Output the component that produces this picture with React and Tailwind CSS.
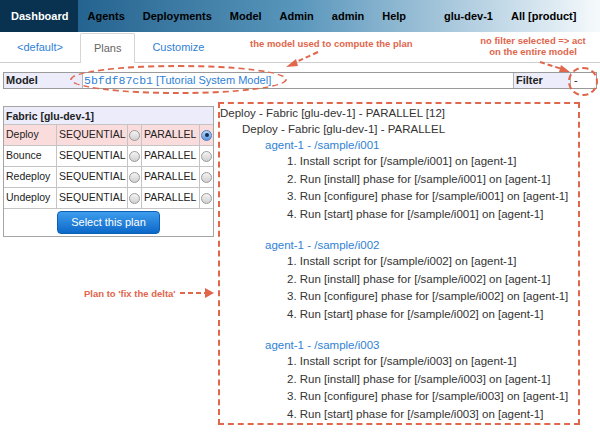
import React from 'react'

const navItems = ['Agents', 'Deployments', 'Model', 'Admin', 'admin', 'Help']
const RED = '#e0664c'

function Radio({ checked }) {
  return checked ? (
    <span className="inline-flex w-[11px] h-[11px] rounded-full border border-[#4a7fc0] bg-gradient-to-b from-[#bcd6f5] to-[#5d97df] items-center justify-center">
      <span className="w-[4px] h-[4px] rounded-full bg-[#10305a]" />
    </span>
  ) : (
    <span className="inline-block w-[11px] h-[11px] rounded-full border border-[#9a9a9a] bg-gradient-to-b from-[#f4f4f4] to-[#d0d0d0]" />
  )
}

const fabricRows = ['Deploy', 'Bounce', 'Redeploy', 'Undeploy']

function Agent({ id, last }) {
  const p = `/sample/${id}`
  return (
    <div className={last ? '' : 'mb-[14px]'}>
      <div className="h-[16px] leading-[16px] pl-[45px] text-[#2f82d6]">agent-1 - {p}</div>
      <div className="pl-[67px] leading-[17.5px] text-[#333]">
        <div>1. Install script for [{p}] on [agent-1]</div>
        <div>2. Run [install] phase for [{p}] on [agent-1]</div>
        <div>3. Run [configure] phase for [{p}] on [agent-1]</div>
        <div>4. Run [start] phase for [{p}] on [agent-1]</div>
      </div>
    </div>
  )
}

export default function App() {
  return (
    <div className="relative w-[600px] h-[432px] overflow-hidden bg-white text-[#222] font-['Liberation_Sans',Arial,sans-serif]">
      {/* top nav */}
      <nav className="flex h-[32px] items-stretch whitespace-nowrap bg-gradient-to-r from-[#0c5280] via-[#5a97bc] to-[#f6fafc] text-[11px] font-bold">
        <div className="flex shrink-0 items-center pl-[11px] pr-[10px] bg-[#08324f] text-white">Dashboard</div>
        {navItems.map((n) => (
          <div key={n} className="flex shrink-0 items-center px-[9px] text-black">{n}</div>
        ))}
        <div className="w-[20px] shrink-0" />
        <div className="flex shrink-0 items-center px-[9px] text-black">glu-dev-1</div>
        <div className="flex shrink-0 items-center px-[9px] text-black">All [product]</div>
      </nav>

      {/* tabs */}
      <div className="flex h-[31px] items-end border-b border-[#cfcfcf] text-[11px]">
        <div className="h-[30px] flex items-center pl-[17px] pr-[17px] text-[#2f7fd8]">&lt;default&gt;</div>
        <div className="h-[30px] flex items-center px-[13px] text-[#666] border border-b-0 border-[#d6d6d6] rounded-t-[2px] bg-white -mb-px">Plans</div>
        <div className="h-[30px] flex items-center px-[17px] text-[#2f7fd8]">Customize</div>
      </div>

      {/* model row */}
      <div className="mt-[9px] mx-[3px] flex h-[17px] border border-[#9a9a9a] text-[11px] leading-[15px]">
        <div className="w-[79px] bg-[#ececfb] font-bold pl-[2px] border-r border-[#b5b5b5]">Model</div>
        <div className="flex-1 pl-[1px] text-[#2f7fd8]">
          <span className="font-['Liberation_Mono',monospace] text-[11.5px]">5bfdf87cb1</span> [Tutorial System Model]
        </div>
        <div className="w-[57px] bg-[#ececfb] font-bold pl-[2px] border-l border-[#b5b5b5]">Filter</div>
        <div className="w-[26px] pl-[3px] border-l border-[#b5b5b5]">-</div>
      </div>

      <div className="flex mt-[13px] ml-[3px]">
        {/* fabric table */}
        <div className="mt-[4px] w-[211px] self-start border border-[#a5a5a5] text-[10.5px]">
          <div className="h-[18px] leading-[18px] bg-[#ececfb] font-bold pl-[2px] border-b border-[#c4c4c4]">Fabric [glu-dev-1]</div>
          {fabricRows.map((r, i) => (
            <div key={r} className={`flex h-[21px] items-center border-b border-[#c4c4c4] ${i === 0 ? 'bg-[#fbdcdc]' : 'bg-white'}`}>
              <div className="w-[53px] h-full flex items-center pl-[2px] border-r border-[#c4c4c4]">{r}</div>
              <div className="w-[71px] h-full flex items-center pl-[2px] border-r border-[#c4c4c4]">SEQUENTIAL</div>
              <div className="w-[14px] h-full flex items-center justify-center border-r border-[#c4c4c4]"><Radio /></div>
              <div className="w-[58px] h-full flex items-center pl-[2px] border-r border-[#c4c4c4]">PARALLEL</div>
              <div className="flex-1 h-full flex items-center justify-center"><Radio checked={i === 0} /></div>
            </div>
          ))}
          <div className="h-[27px] flex items-center justify-center">
            <button className="w-[103px] h-[23px] rounded-[4px] bg-gradient-to-b from-[#3d9ded] to-[#0a68c8] border border-[#0b5fb5] text-white text-[11px]">
              Select this plan
            </button>
          </div>
        </div>

        {/* plan */}
        <div className="ml-[4px] w-[362px] border-2 border-dashed border-[#e0664c] pt-[1px] text-[11.5px] text-[#333]">
          <div className="h-[16px] leading-[16px]">Deploy - Fabric [glu-dev-1] - PARALLEL [12]</div>
          <div className="h-[16px] leading-[16px] pl-[22px]">Deploy - Fabric [glu-dev-1] - PARALLEL</div>
          <Agent id="i001" />
          <Agent id="i002" />
          <Agent id="i003" last />
        </div>
      </div>

      {/* annotations */}
      <div className="absolute left-[250px] top-[37px] text-[9.5px] font-bold text-[#e0664c]">the model used to compute the plan</div>
      <div className="absolute left-[478px] top-[35px] w-[110px] text-center leading-[11px] text-[9.5px] font-bold text-[#e0664c]">
        no filter selected =&gt; act<br />on the entire model
      </div>
      <div className="absolute left-[84px] top-[287px] text-[9.5px] font-bold text-[#e0664c]">Plan to 'fix the delta'</div>
      <div className="absolute left-[70px] top-[65px] w-[217px] h-[29px] rounded-[50%] border-2 border-dashed border-[#e0664c]" />
      <div className="absolute left-[568px] top-[67px] w-[30px] h-[29px] rounded-full border-2 border-dashed border-[#e0664c]" />
      <svg className="absolute inset-0 pointer-events-none" width="600" height="432">
        <g stroke={RED} strokeWidth="2" strokeDasharray="5 3" fill="none">
          <path d="M318 52 Q305 58 294 63" />
          <path d="M540 62 L562 69" />
          <path d="M180 293 L206 293" />
        </g>
        <g fill={RED}>
          <polygon points="286,67 296,59 298,66" />
          <polygon points="570,72 561,65 559,72" />
          <polygon points="214,293 205,288 205,298" />
        </g>
      </svg>
    </div>
  )
}
